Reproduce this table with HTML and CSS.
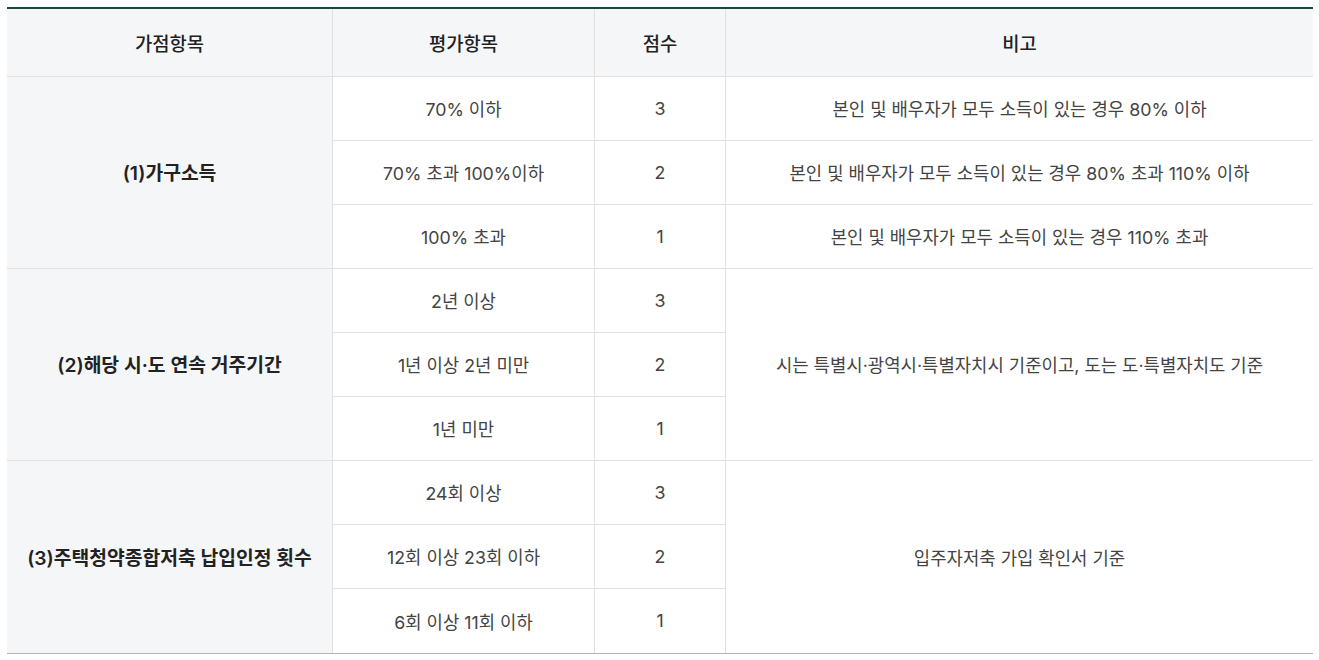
FILE: index.html
```html
<!DOCTYPE html>
<html lang="ko">
<head>
<meta charset="utf-8">
<title>가점항목</title>
<link rel="stylesheet" href="styles.css">
</head>
<body>
<div class="wrap">
<table class="score">
  <colgroup>
    <col class="c1"><col class="c2"><col class="c3"><col class="c4">
  </colgroup>
  <thead>
    <tr><th>가점항목</th><th>평가항목</th><th>점수</th><th class="last">비고</th></tr>
  </thead>
  <tbody>
    <tr><td class="item" rowspan="3">(1)가구소득</td><td>70% 이하</td><td>3</td><td class="last">본인 및 배우자가 모두 소득이 있는 경우 80% 이하</td></tr>
    <tr><td>70% 초과 100%이하</td><td>2</td><td class="last">본인 및 배우자가 모두 소득이 있는 경우 80% 초과 110% 이하</td></tr>
    <tr><td>100% 초과</td><td>1</td><td class="last">본인 및 배우자가 모두 소득이 있는 경우 110% 초과</td></tr>
    <tr><td class="item" rowspan="3">(2)해당 시·도 연속 거주기간</td><td>2년 이상</td><td>3</td><td class="last" rowspan="3">시는 특별시·광역시·특별자치시 기준이고, 도는 도·특별자치도 기준</td></tr>
    <tr><td>1년 이상 2년 미만</td><td>2</td></tr>
    <tr><td>1년 미만</td><td>1</td></tr>
    <tr><td class="item end" rowspan="3">(3)주택청약종합저축 납입인정 횟수</td><td>24회 이상</td><td>3</td><td class="last end" rowspan="3">입주자저축 가입 확인서 기준</td></tr>
    <tr><td>12회 이상 23회 이하</td><td>2</td></tr>
    <tr><td class="end">6회 이상 11회 이하</td><td class="end">1</td></tr>
  </tbody>
</table>
</div>
</body>
</html>
```
FILE: styles.css
```css
html, body {
  margin: 0;
  padding: 0;
  background: #ffffff;
}
.wrap {
  padding: 7px 6px 0 7px;
}
.score {
  width: 1306px;
  table-layout: fixed;
  border-collapse: separate;
  border-spacing: 0;
  font-family: Inter, "Noto Sans CJK KR", sans-serif;
  font-size: 17.8px;
  color: #444;
  border-top: 2px solid #174a3a;
  border-bottom: 1px solid #b3b3b3;
}
.c1 { width: 326px; }
.c2 { width: 262px; }
.c3 { width: 131px; }
.c4 { width: 587px; }
.score th, .score td {
  box-sizing: border-box;
  padding: 0 10px;
  text-align: center;
  vertical-align: middle;
  border-right: 1px solid #e0e0e0;
  border-bottom: 1px solid #e0e0e0;
}
.score th {
  height: 68px;
  background: #f5f6f8;
  font-size: 18.8px;
  font-weight: 500;
  color: #222;
}
.score td {
  height: 64px;
  padding-bottom: 1px;
}
.score th.last, .score td.last {
  border-right: none;
}
.score td.item {
  background: #f5f6f8;
  font-size: 19.3px;
  font-weight: 600;
  color: #222;
}
.score td.end {
  border-bottom: none;
}
```
